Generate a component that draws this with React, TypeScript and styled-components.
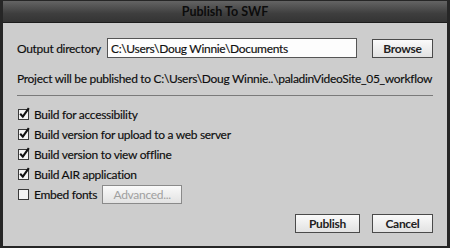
import React, { useState } from 'react';
import styled, { createGlobalStyle } from 'styled-components';

const GlobalStyle = createGlobalStyle`
  html, body {
    margin: 0;
    padding: 0;
    background: #1e1e1e;
  }
  body {
    font-family: Lato, "Open Sans", "Liberation Sans", sans-serif;
  }
`;

// 对话框外框
const Dialog = styled.div`
  width: 450px;
  height: 248px;
  box-sizing: border-box;
  border: 2px solid #262626;
  border-top: 1px solid #262626;
  border-left-width: 3px;
  border-right-width: 3px;
  background: #cdcdcd;
  display: flex;
  flex-direction: column;
`;

const TitleBar = styled.div`
  height: 21px;
  flex: none;
  background: linear-gradient(#646464, #3e3e3e 60%, #343434);
  border-bottom: 1px solid #1c1c1c;
  display: flex;
  align-items: center;
  justify-content: center;
  font-weight: 700;
  font-size: 12.5px;
  color: #0c0c0c;
`;

const Body = styled.div`
  flex: 1;
  padding: 15px 14px 0 14px;
  display: flex;
  flex-direction: column;
  font-size: 12px;
  letter-spacing: -0.3px;
  color: #0d0d0d;
  -webkit-text-stroke: 0.15px #0d0d0d;
`;

const Row = styled.div`
  display: flex;
  align-items: center;
  height: 20px;
`;

const Label = styled.span`
  margin-right: 6px;
`;

const PathInput = styled.input`
  width: 250px;
  height: 20px;
  box-sizing: border-box;
  border: 1px solid #555;
  background: #fdfdfd;
  font: inherit;
  letter-spacing: inherit;
  color: #111;
  padding: 0 3px;
  outline: none;
`;

const Button = styled.button<{ $width: number; $disabled?: boolean }>`
  width: ${(p) => p.$width}px;
  height: 19px;
  box-sizing: border-box;
  border: 1px solid ${(p) => (p.$disabled ? '#8a8a8a' : '#4a4a4a')};
  background: linear-gradient(#fafafa, #e2e2e2);
  font: inherit;
  letter-spacing: inherit;
  font-weight: ${(p) => (p.$disabled ? 400 : 700)};
  color: ${(p) => (p.$disabled ? '#a0a0a0' : '#222')};
  -webkit-text-stroke: 0;
  padding: 0;
`;

const Spacer = styled.div`
  flex: 1;
`;

const Info = styled.div`
  margin-top: 13px;
  height: 16px;
  line-height: 16px;
  white-space: nowrap;
`;

const Divider = styled.hr`
  margin: 8px 0 8px;
  border: none;
  border-top: 1px solid #7a7a7a;
  height: 0;
`;

const Options = styled.div`
  display: flex;
  flex-direction: column;
`;

const CheckRow = styled.label`
  display: flex;
  align-items: center;
  height: 20px;
  gap: 5px;
  cursor: default;
`;

const Box = styled.span`
  position: relative;
  width: 11px;
  height: 11px;
  box-sizing: border-box;
  border: 1px solid #3a3a3a;
  background: #f4f4f4;
  margin-left: 1px;
  flex: none;

  svg {
    position: absolute;
    left: 0;
    top: -3px;
    overflow: visible;
  }
`;

const Footer = styled.div`
  display: flex;
  justify-content: flex-end;
  gap: 12px;
  margin-top: 10px;
`;

const Check = ({ on }: { on: boolean }) => (
  <Box>
    {on && (
      <svg width="11" height="12" viewBox="0 0 11 12">
        <path d="M1.2 6.8 L3.8 9.6 L9.8 1.2" fill="none" stroke="#111" strokeWidth="2.1" />
      </svg>
    )}
  </Box>
);

const options = [
  { label: 'Build for accessibility', on: true },
  { label: 'Build version for upload to a web server', on: true },
  { label: 'Build version to view offline', on: true },
  { label: 'Build AIR application', on: true },
];

const App = () => {
  const [dir, setDir] = useState('C:\\Users\\Doug Winnie\\Documents');

  return (
    <Dialog>
      <GlobalStyle />
      <TitleBar>Publish To SWF</TitleBar>
      <Body>
        <Row>
          <Label>Output directory</Label>
          <PathInput value={dir} onChange={(e) => setDir(e.target.value)} />
          <Spacer />
          <Button $width={61}>Browse</Button>
        </Row>
        <Info>Project will be published to C:\Users\Doug Winnie..\paladinVideoSite_05_workflow</Info>
        <Divider />
        <Options>
          {options.map((o) => (
            <CheckRow key={o.label}>
              <Check on={o.on} />
              {o.label}
            </CheckRow>
          ))}
          <CheckRow>
            <Check on={false} />
            Embed fonts
            <Button $width={80} $disabled>Advanced...</Button>
          </CheckRow>
        </Options>
        <Footer>
          <Button $width={65}>Publish</Button>
          <Button $width={61}>Cancel</Button>
        </Footer>
      </Body>
    </Dialog>
  );
};

export default App;
